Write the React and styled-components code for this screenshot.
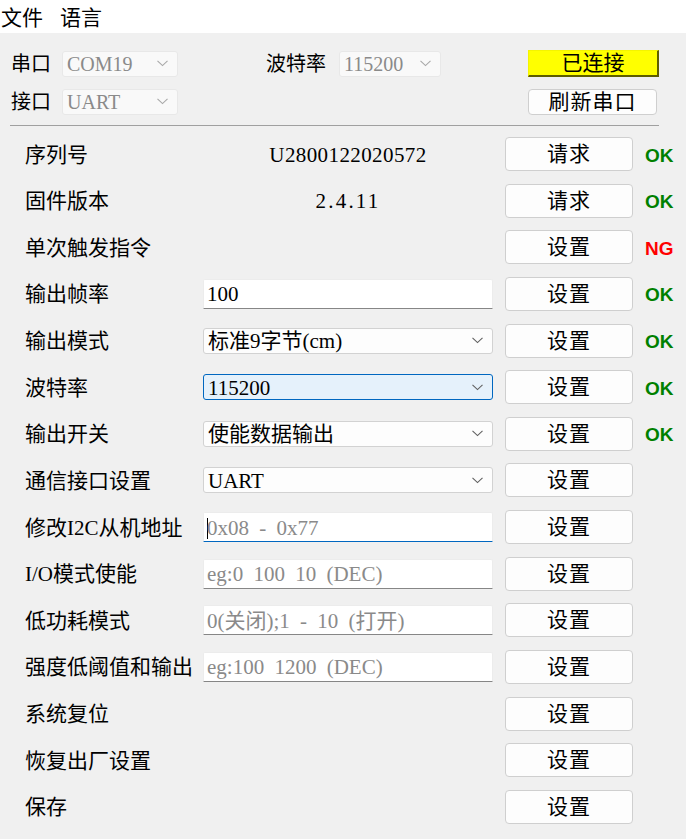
import React from 'react';
import styled, { createGlobalStyle } from 'styled-components';

const GlobalStyle = createGlobalStyle`
  html, body {
    margin: 0;
    padding: 0;
    background: #f0f0f0;
  }
`;

const SERIF = `"Liberation Serif", "Noto Sans CJK SC", serif`;

const Page = styled.div`
  width: 686px;
  height: 839px;
  background: #f0f0f0;
  font-family: ${SERIF};
  color: #000;
  overflow: hidden;
`;

const MenuBar = styled.div`
  height: 33px;
  background: #fff;
  display: flex;
  align-items: center;
  gap: 17px;
  padding-left: 1px;
  font-family: "Noto Sans CJK SC", sans-serif;
  font-size: 21px;
  line-height: 1;
`;

const MenuItem = styled.span`
  display: block;
  margin-top: -1px;
`;

const TopGrid = styled.div`
  display: grid;
  grid-template-columns: 51px 116px 88px 73px 102px 87px 131px;
  grid-template-rows: 27px 25px;
  row-gap: 12px;
  align-items: center;
  padding: 17px 0 0 11px;
`;

const Label = styled.span`
  font-size: 20px;
  line-height: 1;
  white-space: nowrap;
  grid-column: ${p => p.$col || 'auto'};
`;

const Chevron = ({ color = '#707070' }) => (
  <svg width="11" height="7" viewBox="0 0 11 7">
    <path d="M0.5 0.8 L5.5 5.6 L10.5 0.8" fill="none" stroke={color} strokeWidth="1.1" />
  </svg>
);

const Combo = styled.div`
  grid-column: ${p => p.$col || 'auto'};
  height: ${p => p.$h || 26}px;
  box-sizing: border-box;
  display: flex;
  align-items: center;
  justify-content: space-between;
  padding: 0 9px 0 4px;
  border-radius: 3px;
  border: 1px solid ${p => (p.$focus ? '#0067c0' : p.$disabled ? '#e8e8e8' : '#d2d2d2')};
  background: ${p => (p.$focus ? '#e5f1fb' : p.$disabled ? '#f9f9f9' : '#fdfdfd')};
  color: ${p => (p.$disabled ? '#8a8a8a' : '#000')};
  font-size: ${p => (p.$disabled ? 20 : 21)}px;
  line-height: 1;
  white-space: nowrap;
  word-spacing: 4px;

  & > span {
    padding-top: ${p => (p.$disabled ? 0 : 2)}px;
  }
`;

const ConnectButton = styled.div`
  grid-column: 7;
  height: 27px;
  box-sizing: border-box;
  background: #ffff00;
  border-top: 1px solid #f4f400;
  border-left: 1px solid #f4f400;
  border-right: 2px solid #5e5e00;
  border-bottom: 2px solid #5e5e00;
  display: flex;
  align-items: center;
  justify-content: center;
  font-size: 21px;
  line-height: 1;
`;

const Button = styled.div`
  grid-column: ${p => p.$col || 'auto'};
  width: ${p => p.$w || 128}px;
  height: ${p => p.$h || 34}px;
  box-sizing: border-box;
  background: #fdfdfd;
  border: 1px solid #cfcfcf;
  border-radius: 4px;
  display: flex;
  align-items: center;
  justify-content: center;
  font-size: 21px;
  line-height: 1;
  letter-spacing: 1px;
  padding-top: 1px;
`;

const Separator = styled.div`
  margin: 11px 27px 0 10px;
  height: 1px;
  background: #a0a0a0;
`;

const Form = styled.div`
  display: grid;
  grid-template-columns: 166px 290px 128px auto;
  grid-auto-rows: 34px;
  column-gap: 12px;
  row-gap: 12.64px;
  align-items: center;
  padding: 11px 0 0 25px;
`;

const RowLabel = styled.span`
  font-size: 21px;
  line-height: 1;
  white-space: nowrap;
  padding-top: 2px;
`;

const Value = styled.span`
  font-size: 21px;
  line-height: 1;
  text-align: center;
  letter-spacing: ${p => p.$spacing || 0.4}px;
  padding-top: 2px;
`;

const TextBox = styled.div`
  height: 30px;
  box-sizing: border-box;
  background: #fff;
  border: 1px solid #ececec;
  border-bottom: 1px solid ${p => (p.$focus ? '#0067c0' : '#868686')};
  border-radius: 2px 2px 0 0;
  display: flex;
  align-items: center;
  padding: 2px 0 0 3px;
  font-size: 21px;
  line-height: 1;
  white-space: nowrap;
  word-spacing: 5px;
  overflow: hidden;
  color: ${p => (p.$placeholder ? '#8a8a8a' : '#000')};
`;

const Caret = styled.span`
  display: inline-block;
  width: 1px;
  height: 21px;
  background: #000;
  margin-right: -1px;
`;

const Status = styled.span`
  font-family: "Liberation Sans", Arial, sans-serif;
  font-weight: bold;
  font-size: 19px;
  line-height: 1;
  padding-top: 2px;
  color: ${p => (p.$ok ? '#008000' : '#ff0000')};
`;

const rows = [
  { label: '序列号', value: 'U2800122020572', btn: '请求', status: 'OK' },
  { label: '固件版本', value: '2.4.11', spacing: 2.2, btn: '请求', status: 'OK' },
  { label: '单次触发指令', btn: '设置', status: 'NG' },
  { label: '输出帧率', input: '100', btn: '设置', status: 'OK' },
  { label: '输出模式', combo: '标准9字节(cm)', btn: '设置', status: 'OK' },
  { label: '波特率', combo: '115200', focus: true, btn: '设置', status: 'OK' },
  { label: '输出开关', combo: '使能数据输出', btn: '设置', status: 'OK' },
  { label: '通信接口设置', combo: 'UART', btn: '设置' },
  { label: '修改I2C从机地址', placeholder: '0x08 - 0x77', focus: true, btn: '设置' },
  { label: 'I/O模式使能', placeholder: 'eg:0 100 10 (DEC)', btn: '设置' },
  { label: '低功耗模式', placeholder: '0(关闭);1 - 10 (打开)', btn: '设置' },
  { label: '强度低阈值和输出', placeholder: 'eg:100 1200 (DEC)', btn: '设置' },
  { label: '系统复位', btn: '设置' },
  { label: '恢复出厂设置', btn: '设置' },
  { label: '保存', btn: '设置' },
];

const Middle = ({ row }) => {
  if (row.value) return <Value $spacing={row.spacing}>{row.value}</Value>;
  if (row.input) return <TextBox>{row.input}</TextBox>;
  if (row.combo)
    return (
      <Combo $focus={row.focus}>
        <span>{row.combo}</span>
        <Chevron color="#606060" />
      </Combo>
    );
  if (row.placeholder)
    return (
      <TextBox $placeholder $focus={row.focus}>
        {row.focus && <Caret />}
        {row.placeholder}
      </TextBox>
    );
  return <span />;
};

export default function App() {
  return (
    <Page>
      <GlobalStyle />
      <MenuBar>
        <MenuItem>文件</MenuItem>
        <MenuItem>语言</MenuItem>
      </MenuBar>

      <TopGrid>
        <Label $col={1}>串口</Label>
        <Combo $col={2} $h={26} $disabled>
          <span>COM19</span>
          <Chevron color="#a8a8a8" />
        </Combo>
        <Label $col={4}>波特率</Label>
        <Combo $col={5} $h={26} $disabled>
          <span>115200</span>
          <Chevron color="#a8a8a8" />
        </Combo>
        <ConnectButton>已连接</ConnectButton>

        <Label $col={1}>接口</Label>
        <Combo $col={2} $h={26} $disabled>
          <span>UART</span>
          <Chevron color="#a8a8a8" />
        </Combo>
        <Button $col={7} $w={129} $h={26}>刷新串口</Button>
      </TopGrid>

      <Separator />

      <Form>
        {rows.map(row => (
          <React.Fragment key={row.label}>
            <RowLabel>{row.label}</RowLabel>
            <Middle row={row} />
            <Button>{row.btn}</Button>
            {row.status ? <Status $ok={row.status === 'OK'}>{row.status}</Status> : <span />}
          </React.Fragment>
        ))}
      </Form>
    </Page>
  );
}
